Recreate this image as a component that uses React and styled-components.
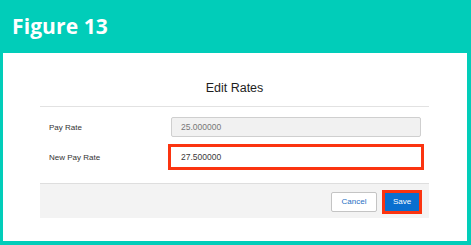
import React from "react";
import styled, { createGlobalStyle } from "styled-components";

const Global = createGlobalStyle`
  html, body { margin: 0; padding: 0; }
  body { background: #00ccb8; font-family: "Liberation Sans", Arial, sans-serif; }
  #root { width: 471px; height: 245px; }
`;

const Frame = styled.div`
  width: 471px;
  height: 245px;
  background: #01cdb9;
  display: flex;
  flex-direction: column;
  box-sizing: border-box;
  padding: 0 4px 4px 3px;
`;

const Header = styled.div`
  height: 53px;
  display: flex;
  align-items: center;
  padding-left: 9px;
  padding-bottom: 1px;
  box-sizing: border-box;
  color: #ffffff;
  font-family: "Open Sans", "Lato", sans-serif;
  font-weight: 700;
  font-size: 21px;
  letter-spacing: 0.1px;
`;

const Panel = styled.div`
  flex: 1;
  background: #ffffff;
  padding: 0 38px 0 37px;
  display: flex;
  flex-direction: column;
`;

const Title = styled.div`
  padding: 27px 0 10px;
  line-height: 16px;
  text-align: center;
  font-size: 12.5px;
  color: #1e1e1e;
  border-bottom: 1px solid #e2e2e2;
`;

const Body = styled.div`
  padding: 10px 8px 16px 9px;
  display: grid;
  grid-template-columns: 122px 1fr;
  row-gap: 10px;
  align-items: center;
`;

const Label = styled.div`
  font-size: 8px;
  color: #333;
`;

const Field = styled.div`
  height: 20px;
  box-sizing: border-box;
  border: 1px solid ${(p) => (p.$disabled ? "#cfcfcf" : "#ffffff")};
  border-radius: ${(p) => (p.$highlight ? "0" : "2px")};
  background: ${(p) => (p.$disabled ? "#f1f1f1" : "#fff")};
  color: ${(p) => (p.$disabled ? "#777" : "#3a3a3a")};
  font-size: 8.5px;
  padding-left: 9px;
  display: flex;
  align-items: center;
  outline: ${(p) => (p.$highlight ? "3px solid #fb3410" : "none")};
`;

const Footer = styled.div`
  height: 35px;
  box-sizing: border-box;
  background: #f3f3f3;
  border-top: 1px solid #dedede;
  display: flex;
  align-items: center;
  justify-content: flex-end;
  gap: 8px;
  padding: 1px 10px 0 0;
`;

const Button = styled.button`
  box-sizing: border-box;
  font-family: "Liberation Sans", Arial, sans-serif;
  font-size: 8px;
  border-radius: ${(p) => (p.$highlight ? "0" : "2px")};
  padding: 0;
  cursor: pointer;
  width: ${(p) => (p.$primary ? "34px" : "46px")};
  height: ${(p) => (p.$primary ? "18px" : "20px")};
  border: 1px solid ${(p) => (p.$primary ? "#0a6fcf" : "#c4c4c4")};
  background: ${(p) => (p.$primary ? "#0a6fcf" : "#ffffff")};
  color: ${(p) => (p.$primary ? "#ffffff" : "#1f6fc4")};
  outline: ${(p) => (p.$highlight ? "3px solid #fb3410" : "none")};
`;

export default function App() {
  return (
    <>
      <Global />
      <Frame>
        <Header>Figure 13</Header>
        <Panel>
          <Title>Edit Rates</Title>
          <Body>
            <Label>Pay Rate</Label>
            <Field $disabled>25.000000</Field>
            <Label>New Pay Rate</Label>
            <Field $highlight>27.500000</Field>
          </Body>
          <Footer>
            <Button>Cancel</Button>
            <Button $primary $highlight>Save</Button>
          </Footer>
        </Panel>
      </Frame>
    </>
  );
}
